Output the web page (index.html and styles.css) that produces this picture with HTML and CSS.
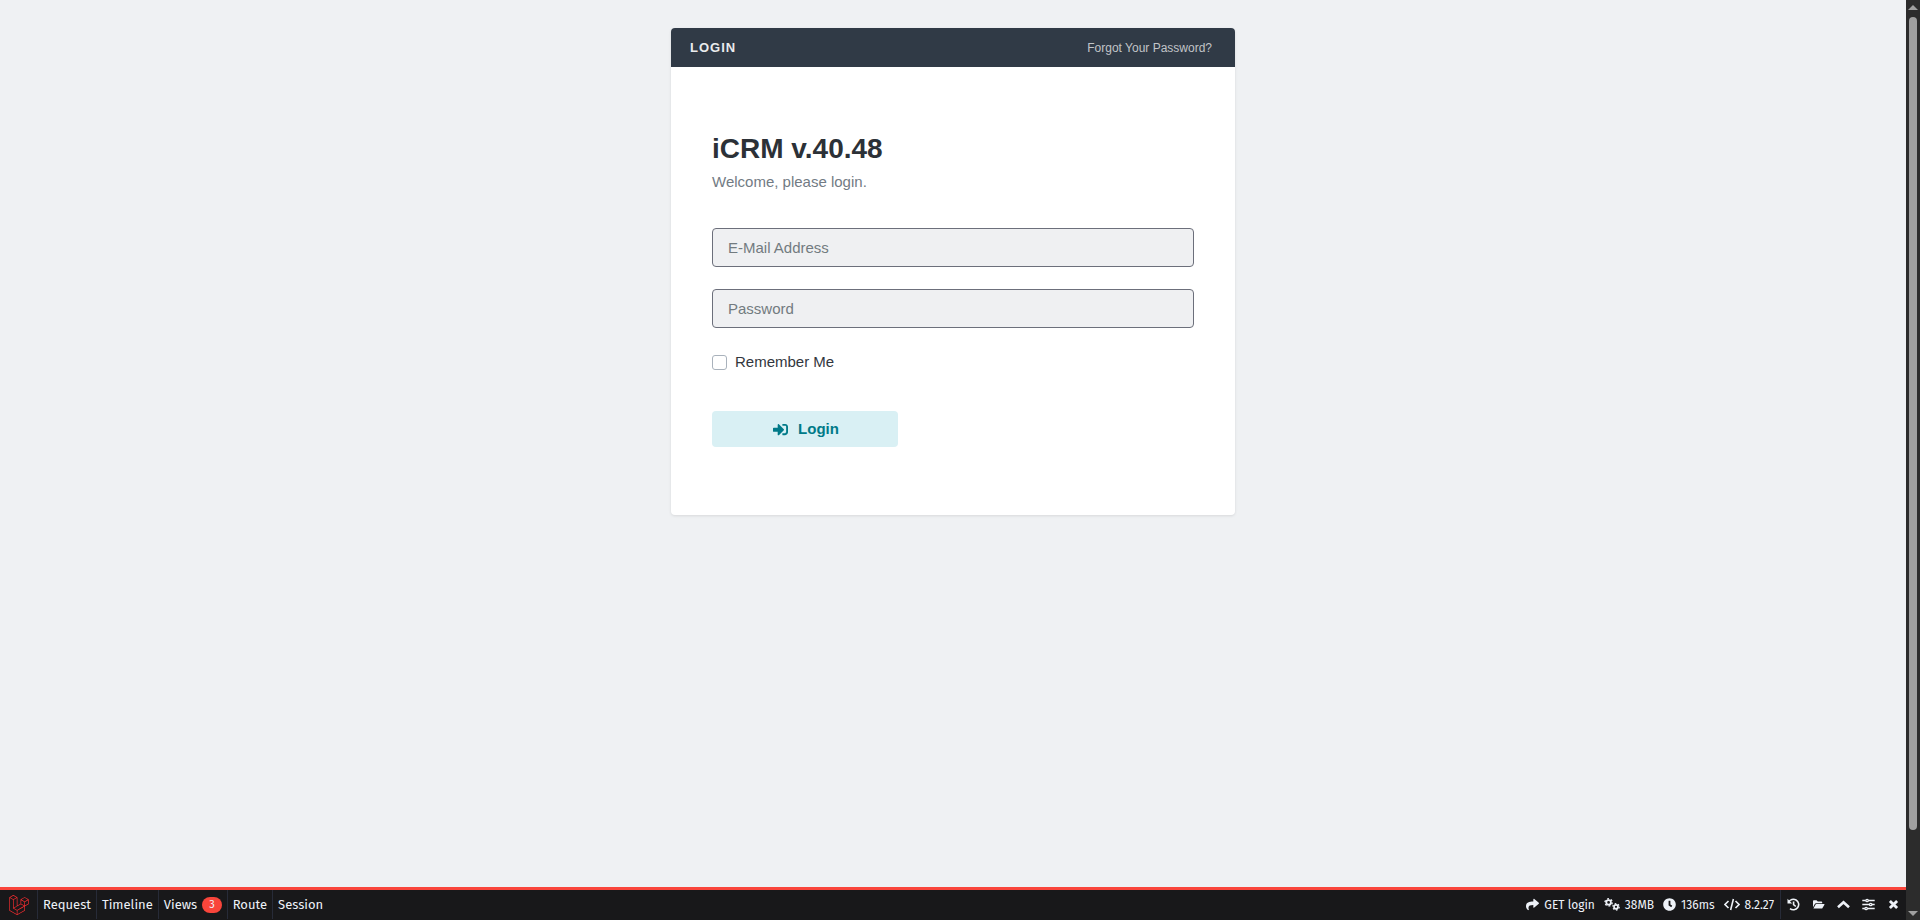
FILE: index.html
```html
<!DOCTYPE html>
<html lang="en">
<head>
<meta charset="utf-8">
<title>iCRM - Login</title>
<link rel="stylesheet" href="styles.css">
</head>
<body>
<div class="window">
  <div class="page">
    <main class="content">
      <section class="card">
        <header class="card-header">
          <span class="card-title">LOGIN</span>
          <a class="forgot" href="#">Forgot Your Password?</a>
        </header>
        <form class="card-body">
          <h1 class="product">iCRM v.40.48</h1>
          <p class="welcome">Welcome, please login.</p>
          <input class="field" type="email" placeholder="E-Mail Address" aria-label="E-Mail Address">
          <input class="field" type="password" placeholder="Password" aria-label="Password">
          <div class="remember">
            <input class="check" type="checkbox" id="remember">
            <label for="remember">Remember Me</label>
          </div>
          <button class="login" type="submit">
            <svg class="login-icon" viewBox="0 0 512 512" aria-hidden="true"><path d="M416 448h-84c-6.6 0-12-5.4-12-12v-40c0-6.6 5.4-12 12-12h84c17.7 0 32-14.3 32-32V160c0-17.7-14.3-32-32-32h-84c-6.6 0-12-5.4-12-12V76c0-6.6 5.4-12 12-12h84c53 0 96 43 96 96v192c0 53-43 96-96 96zm-47-201L201 79c-15-15-41-4.5-41 17v96H24c-13.3 0-24 10.7-24 24v96c0 13.3 10.7 24 24 24h136v96c0 21.5 26 32 41 17l168-168c9.3-9.4 9.3-24.6 0-34z"/></svg>
            <span>Login</span>
          </button>
        </form>
      </section>
    </main>
    <footer class="debugbar">
      <nav class="tabs">
        <a class="brand" href="#" aria-label="Laravel"><svg viewBox="0 0 24 24" aria-hidden="true"><path d="M23.642 5.43a.364.364 0 01.014.1v5.149c0 .135-.073.26-.189.326l-4.323 2.49v4.934a.378.378 0 01-.188.326L9.93 23.949a.316.316 0 01-.066.027c-.008.002-.016.008-.024.01a.348.348 0 01-.192 0c-.011-.002-.02-.008-.03-.012-.02-.008-.042-.014-.062-.025L.533 18.755a.376.376 0 01-.189-.326V2.974c0-.033.005-.066.014-.098.003-.012.01-.02.014-.032a.369.369 0 01.023-.058c.004-.013.015-.022.023-.033l.033-.045c.012-.01.025-.018.037-.027.014-.012.027-.024.041-.034H.53L5.043.05a.375.375 0 01.375 0L9.93 2.647h.002c.015.01.027.021.04.033l.038.027c.013.014.02.03.033.045.008.011.02.021.025.033.01.02.017.038.024.058.003.011.01.021.013.032.01.031.014.064.014.098v9.652l3.76-2.164V5.527c0-.033.004-.066.013-.098.003-.01.01-.02.013-.032a.487.487 0 01.024-.059c.007-.012.018-.02.025-.033.012-.015.021-.03.033-.043.012-.012.025-.02.037-.028.014-.01.026-.023.041-.032h.001l4.513-2.598a.375.375 0 01.375 0l4.513 2.598c.016.01.027.021.042.031.012.01.025.018.036.028.013.014.022.03.034.044.008.012.019.021.024.033.011.02.018.04.024.06.006.01.012.021.015.032zm-.74 5.032V6.179l-1.578.908-2.182 1.256v4.283zm-4.51 7.75v-4.287l-2.147 1.225-6.126 3.498v4.325zM1.093 3.624v14.588l8.273 4.761v-4.325l-4.322-2.445-.002-.003H5.04c-.014-.01-.025-.021-.04-.031-.011-.01-.024-.018-.035-.027l-.001-.002c-.013-.012-.021-.025-.031-.04-.01-.011-.021-.022-.028-.036h-.003c-.008-.014-.013-.031-.02-.047-.006-.016-.014-.027-.018-.043a.49.49 0 01-.008-.057c-.002-.014-.006-.027-.006-.041V5.789l-2.18-1.257zM5.23.81L1.47 2.974l3.76 2.164 3.758-2.164zm1.956 13.505l2.182-1.256V3.624l-1.58.91-2.182 1.255v9.435zm11.581-10.95l-3.76 2.163 3.76 2.163 3.759-2.164zm-.376 4.978L16.21 7.087 14.63 6.18v4.283l2.182 1.256 1.58.908zm-8.65 9.654l5.514-3.148 2.756-1.572-3.757-2.163-4.323 2.489-3.941 2.27z"/></svg></a>
        <a class="tab" href="#">Request</a>
        <a class="tab" href="#">Timeline</a>
        <a class="tab" href="#">Views <span class="badge">3</span></a>
        <a class="tab" href="#">Route</a>
        <a class="tab" href="#">Session</a>
      </nav>
      <div class="status">
        <span class="stat"><svg class="icon" viewBox="0 0 512 512" aria-hidden="true"><path d="M503.691 189.836L327.687 37.851C312.281 24.546 288 35.347 288 56.015v80.053C127.371 137.907 0 170.1 0 322.326c0 61.441 39.581 122.309 83.333 154.132 13.653 9.931 33.111-2.533 28.077-18.631C66.066 312.814 132.917 274.316 288 272.085V360c0 20.7 24.3 31.453 39.687 18.164l176.004-152c11.071-9.562 11.086-26.753 0-36.328z"/></svg>GET login</span>
        <span class="stat"><svg class="icon icon-wide" viewBox="0 0 16 13" aria-hidden="true"><g class="line"><circle cx="4.6" cy="4.4" r="2.3" stroke-width="1.8"/><circle cx="4.6" cy="4.4" r="3.6" stroke-width="1.4" stroke-dasharray="1.8 1.97"/><circle cx="12" cy="8.8" r="2" stroke-width="1.7"/><circle cx="12" cy="8.8" r="3.2" stroke-width="1.3" stroke-dasharray="1.6 1.75"/></g></svg>38MB</span>
        <span class="stat"><svg class="icon" viewBox="0 0 512 512" aria-hidden="true"><path d="M256 8C119 8 8 119 8 256s111 248 248 248 248-111 248-248S393 8 256 8zm57.1 350.1L224.9 294c-3.1-2.3-4.9-5.9-4.9-9.7V116c0-6.6 5.4-12 12-12h48c6.6 0 12 5.4 12 12v137.7l63.5 46.2c5.4 3.9 6.5 11.4 2.6 16.8l-28.2 38.8c-3.9 5.3-11.4 6.5-16.8 2.6z"/></svg>136ms</span>
        <span class="stat"><svg class="icon icon-wide" viewBox="0 0 16 13" aria-hidden="true"><path class="line" stroke-width="1.6" d="M4.5 3L1 6.5 4.5 10M11.5 3L15 6.5 11.5 10M9.4 1L6.6 12"/></svg>8.2.27</span>
      </div>
      <div class="tools">
        <button class="tool" type="button" aria-label="History"><svg class="icon" viewBox="0 0 13 13" aria-hidden="true"><path class="line" stroke-width="1.6" d="M1.6 4.2A5.3 5.3 0 1 1 3 10.6M6.6 3.4v3.3l2.2 1.8"/><path d="M.5.8v4.6h4.6z"/></svg></button>
        <button class="tool" type="button" aria-label="Open"><svg class="icon" viewBox="0 0 13 13" aria-hidden="true"><path d="M1 9.2V3q0-.8.8-.8h2.7l1.3 1.3h3.6q.8 0 .8.8v1H4q-.8 0-1.2.8zM1.4 10.6l2.2-4q.3-.5.8-.5h7.7q.7 0 .3.7l-1.9 3.3q-.3.5-.9.5z"/></svg></button>
        <button class="tool" type="button" aria-label="Minimize"><svg class="icon" viewBox="0 0 13 13" aria-hidden="true"><path class="line" stroke-width="2.6" d="M1 9.2l5.5-5 5.5 5"/></svg></button>
        <button class="tool" type="button" aria-label="Settings"><svg class="icon" viewBox="0 0 13 13" aria-hidden="true"><g class="line" stroke-width="1.3"><path d="M.3 2.5h3.5M6.4 2.5h6.3M.3 6.5h7.1M10 6.5h2.7M.3 10.5h2.5M5.4 10.5h7.3"/><circle cx="5.1" cy="2.5" r="1.2"/><circle cx="8.7" cy="6.5" r="1.2"/><circle cx="4.1" cy="10.5" r="1.2"/></g></svg></button>
        <button class="tool" type="button" aria-label="Close"><svg class="icon" viewBox="0 0 13 13" aria-hidden="true"><path class="line" stroke-width="2.8" d="M2.9 2.9l7.2 7.2M10.1 2.9l-7.2 7.2"/></svg></button>
      </div>
    </footer>
  </div>
  <div class="scrollbar" aria-hidden="true">
    <svg class="arrow" viewBox="0 0 10 5"><path d="M0 5l5-5 5 5z"/></svg>
    <div class="track"><div class="thumb"></div></div>
    <svg class="arrow" viewBox="0 0 10 5"><path d="M0 0l5 5 5-5z"/></svg>
  </div>
</div>
</body>
</html>
```

FILE: styles.css
```css
* { box-sizing: border-box; }

body {
  margin: 0;
  background: #eff1f3;
  color: #32373d;
  font: 15px/22px "Liberation Sans", Arial, sans-serif;
}

.window { display: flex; height: 100vh; overflow: hidden; }
.page { flex: 1; display: flex; flex-direction: column; }

.content { flex: 1; min-height: 0; padding: 28px 16px; overflow: auto; }

.card {
  max-width: 564px;
  margin: 0 auto;
  border-radius: 4px;
  background: #fff;
  box-shadow: 0 1px 3px rgba(0, 0, 0, .1);
  overflow: hidden;
}
.card-header {
  display: flex;
  align-items: baseline;
  justify-content: space-between;
  padding: 8px 23px 8px 19px;
  background: #303a46;
  line-height: 23px;
}
.card-title { color: #eaebed; font-size: 13px; font-weight: bold; letter-spacing: 1px; }
.forgot { color: #c1c4c8; font-size: 12px; line-height: 22px; text-decoration: none; }

.card-body { padding: 64px 41px 68px; }
.product { margin: 0; color: #2c3137; font-size: 28px; line-height: 36px; }
.welcome { margin: 4px 0 35px; color: #727b84; }

.field {
  display: block;
  width: 100%;
  height: 39px;
  margin-bottom: 22px;
  padding: 0 15px;
  border: 1px solid #6c6f7b;
  border-radius: 4px;
  background: #eff0f2;
  color: #2c3137;
  font: inherit;
}
.field::placeholder { color: #727b80; opacity: 1; }

.remember { display: flex; align-items: center; gap: 8px; padding-top: 1px; margin-bottom: 38px; }
.check {
  appearance: none;
  width: 15px;
  height: 15px;
  margin: 0;
  border: 1px solid #a9b2bc;
  border-radius: 3px;
  background: #fff;
}

.login {
  display: flex;
  align-items: center;
  justify-content: center;
  gap: 10px;
  width: 186px;
  height: 36px;
  padding: 0 0 0 2px;
  border: 0;
  border-radius: 4px;
  background: #d9f0f4;
  color: #007a88;
  font: bold 15px/22px "Liberation Sans", Arial, sans-serif;
}
.login-icon { width: 15px; height: 15px; fill: currentColor; }

.debugbar {
  display: flex;
  height: 33px;
  padding-bottom: 1px;
  border-top: 3px solid #f9453b;
  background: #18181a;
  color: #eef2f8;
  font: 12px/28px "Fira Sans", Lato, sans-serif;
}
.tabs { display: flex; flex: 1; font-size: 13px; }
.brand { display: flex; align-items: center; padding: 0 8px 0 9px; }
.brand svg { width: 20px; height: 20px; fill: #ff2d30; }
.tab {
  display: flex;
  align-items: center;
  gap: 5px;
  padding: 0 5px;
  border-left: 1px solid #272b38;
  color: inherit;
  text-decoration: none;
}
.badge {
  padding: 0 7px;
  border-radius: 8px;
  background: #f9453b;
  font-size: 11px;
  line-height: 16px;
}
.status { display: flex; gap: 9px; padding-right: 6px; }
.stat { display: flex; align-items: center; gap: 5px; }
.icon { width: 13px; height: 13px; fill: currentColor; }
.icon-wide { width: 16px; }
.line { fill: none; stroke: currentColor; }
.tools { display: flex; gap: 12px; padding: 0 6px; border-left: 1px solid #272b38; }
.tool { display: flex; align-items: center; padding: 0; border: 0; background: none; color: inherit; }

.scrollbar {
  display: flex;
  flex-direction: column;
  align-items: center;
  gap: 7px;
  width: 14px;
  padding: 5px 0 4px;
  background: #2c2c2c;
}
.arrow { width: 10px; height: 5px; fill: #9f9f9f; }
.track { flex: 1; display: grid; grid-template-rows: 11fr 1fr; }
.thumb { width: 8px; border-radius: 4px; background: #9f9f9f; }
```
